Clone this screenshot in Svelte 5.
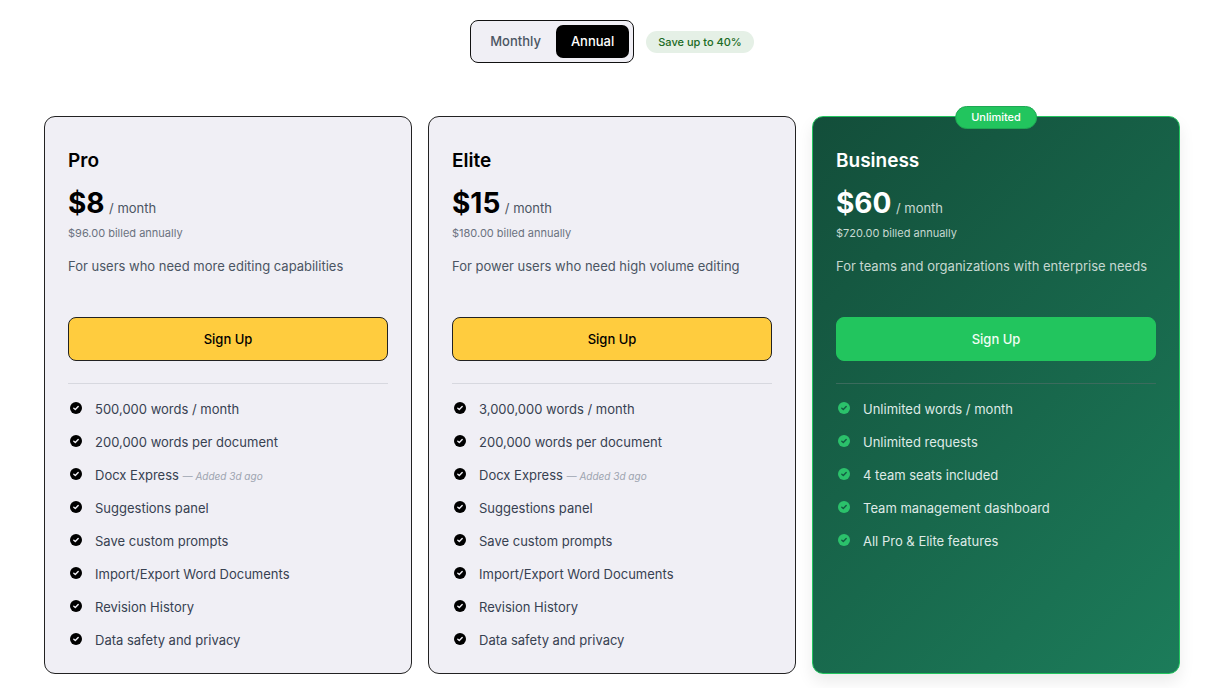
<script>
	let billing = $state('annual');

	const shared = [
		{ text: 'Docx Express', note: '— Added 3d ago' },
		{ text: 'Suggestions panel' },
		{ text: 'Save custom prompts' },
		{ text: 'Import/Export Word Documents' },
		{ text: 'Revision History' },
		{ text: 'Data safety and privacy' }
	];

	const plans = [
		{
			name: 'Pro',
			price: '$8',
			billed: '$96.00 billed annually',
			description: 'For users who need more editing capabilities',
			features: [
				{ text: '500,000 words / month' },
				{ text: '200,000 words per document' },
				...shared
			]
		},
		{
			name: 'Elite',
			price: '$15',
			billed: '$180.00 billed annually',
			description: 'For power users who need high volume editing',
			features: [
				{ text: '3,000,000 words / month' },
				{ text: '200,000 words per document' },
				...shared
			]
		},
		{
			name: 'Business',
			price: '$60',
			billed: '$720.00 billed annually',
			description: 'For teams and organizations with enterprise needs',
			badge: 'Unlimited',
			features: [
				{ text: 'Unlimited words / month' },
				{ text: 'Unlimited requests' },
				{ text: '4 team seats included' },
				{ text: 'Team management dashboard' },
				{ text: 'All Pro & Elite features' }
			]
		}
	];
</script>

<main class="pricing">
	<div class="billing">
		<div class="toggle">
			<button
				type="button"
				class:active={billing === 'monthly'}
				aria-pressed={billing === 'monthly'}
				onclick={() => (billing = 'monthly')}>Monthly</button
			>
			<button
				type="button"
				class:active={billing === 'annual'}
				aria-pressed={billing === 'annual'}
				onclick={() => (billing = 'annual')}>Annual</button
			>
		</div>
		<span class="savings">Save up to 40%</span>
	</div>

	<div class="plans">
		{#each plans as plan}
			<section class="card" class:business={plan.badge}>
				{#if plan.badge}
					<span class="badge">{plan.badge}</span>
				{/if}
				<h2>{plan.name}</h2>
				<p class="price"><strong>{plan.price}</strong> <span>/ month</span></p>
				<p class="billed">{plan.billed}</p>
				<p class="description">{plan.description}</p>
				<button type="button" class="signup">Sign Up</button>
				<ul>
					{#each plan.features as feature}
						<li>
							<svg viewBox="0 0 12 12" aria-hidden="true">
								<circle cx="6" cy="6" r="6" />
								<path d="M3.8 6.2 5.3 7.6 8.2 4.6" />
							</svg>
							<span>
								{feature.text}
								{#if feature.note}<em>{feature.note}</em>{/if}
							</span>
						</li>
					{/each}
				</ul>
			</section>
		{/each}
	</div>
</main>

<style>
	:global(body) {
		margin: 0;
		background: #fff;
	}
	.pricing {
		max-width: 1136px;
		margin: 0 auto;
		padding: 20px 44px 14px;
		font-family: Inter, sans-serif;
		color: #000;
	}
	button {
		font-family: inherit;
		cursor: pointer;
	}
	.billing {
		display: flex;
		align-items: center;
		justify-content: center;
		gap: 12px;
		margin-bottom: 53px;
	}
	.toggle {
		display: flex;
		padding: 4px;
		background: #f0eff5;
		border: 1px solid #111;
		border-radius: 8px;
	}
	.toggle button {
		padding: 0 15px;
		font-size: 13px;
		font-weight: 500;
		line-height: 33px;
		color: #4b5563;
		background: none;
		border: 0;
		border-radius: 7px;
	}
	.toggle button.active {
		color: #fff;
		background: #000;
	}
	.savings {
		padding: 0 12px;
		font-size: 11px;
		font-weight: 500;
		line-height: 22px;
		color: #1b6b24;
		background: #e5f0e6;
		border-radius: 11px;
	}
	.plans {
		display: grid;
		grid-template-columns: repeat(3, 1fr);
		gap: 16px;
	}
	.card {
		position: relative;
		padding: 31px 23px 22px;
		background: #f0eff5;
		border: 1px solid #222;
		border-radius: 11px;
	}
	h2 {
		margin: 0 0 12px;
		font-size: 19px;
		font-weight: 600;
		line-height: 26px;
	}
	.price {
		margin: 0;
		line-height: 34px;
	}
	.price strong {
		font-size: 28px;
		font-weight: 700;
	}
	.price span {
		font-size: 13px;
		color: #4b5563;
	}
	.billed {
		margin: 0 0 14px;
		font-size: 11px;
		line-height: 16px;
		color: #6b7280;
	}
	.description {
		min-height: 44px;
		margin: 0 0 18px;
		font-size: 13px;
		line-height: 22px;
		color: #4b5563;
	}
	.signup {
		display: block;
		width: 100%;
		padding: 0;
		font-size: 13px;
		font-weight: 500;
		line-height: 42px;
		color: #000;
		background: #ffcc3e;
		border: 1px solid #222;
		border-radius: 8px;
	}
	ul {
		display: grid;
		gap: 12px;
		margin: 22px 0 0;
		padding: 15px 0 0;
		list-style: none;
		border-top: 1px solid #d7d8df;
	}
	li {
		display: flex;
		align-items: flex-start;
		gap: 13px;
		padding-left: 2px;
		font-size: 13px;
		line-height: 21px;
		color: #374151;
	}
	li svg {
		flex: none;
		width: 12px;
		height: 12px;
		margin-top: 3px;
	}
	li path {
		fill: none;
		stroke: #f0eff5;
		stroke-width: 1.4;
		stroke-linecap: round;
		stroke-linejoin: round;
	}
	em {
		font-size: 10px;
		line-height: 1;
		color: #9ca3af;
	}
	.business {
		color: #fff;
		background: linear-gradient(135deg, #134e3a, #1c7c5a);
		border-color: #22c55e;
		box-shadow: 0 8px 16px rgba(0, 0, 0, 0.08);
	}
	.badge {
		position: absolute;
		top: -11px;
		left: 50%;
		padding: 0 15px;
		font-size: 11px;
		font-weight: 500;
		line-height: 21px;
		background: #22c55e;
		border: 1px solid #1ea853;
		border-radius: 12px;
		transform: translateX(-50%);
	}
	.business .price span,
	.business .billed,
	.business .description {
		color: #c6d8d1;
	}
	.business .signup {
		color: #f0fdf4;
		background: #22c55e;
		border-color: #22c55e;
	}
	.business ul {
		border-color: #3b6b5d;
	}
	.business li {
		color: #dfeae6;
	}
	.business circle {
		fill: #2bc16b;
	}
	.business path {
		stroke: #145c42;
	}
</style>
